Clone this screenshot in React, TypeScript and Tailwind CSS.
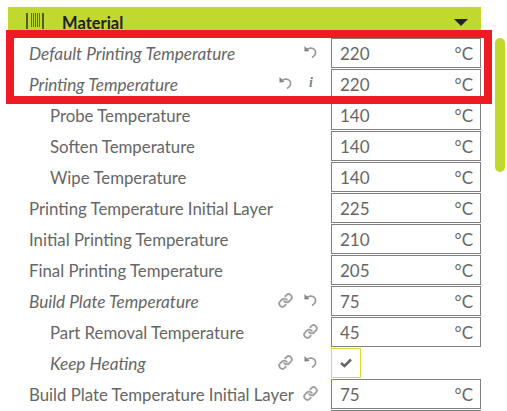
import { Link } from "lucide-react";

function ResetIcon() {
  return (
    <svg width="14" height="14" viewBox="0 0 14 14" fill="none">
      <path d="M0.500 1 L0.500 6.500 L5.500 6 Z" fill="#808080" />
      <path d="M3 4.500 C5 2.800 8.500 2.600 10.500 4.500 C12.500 6.800 12 10.500 8 12.500" stroke="#999999" strokeWidth="1.700" />
    </svg>
  );
}

function LinkIcon() {
  return <Link className="w-[15px] h-[15px] text-[#a0a0a0]" strokeWidth={3} />;
}

function InfoIcon() {
  return <span className="w-[14px] text-center font-['Liberation_Serif',serif] italic font-bold text-[14px] leading-none text-[#808080]">i</span>;
}

type RowProps = {
  label: string;
  value?: string;
  child?: boolean;
  italic?: boolean;
  link?: boolean;
  reset?: boolean;
  info?: boolean;
  check?: boolean;
};

const rows: RowProps[] = [
  { label: "Default Printing Temperature", value: "220", italic: true, reset: true },
  { label: "Printing Temperature", value: "220", italic: true, reset: true, info: true },
  { label: "Probe Temperature", value: "140", child: true },
  { label: "Soften Temperature", value: "140", child: true },
  { label: "Wipe Temperature", value: "140", child: true },
  { label: "Printing Temperature Initial Layer", value: "225" },
  { label: "Initial Printing Temperature", value: "210" },
  { label: "Final Printing Temperature", value: "205" },
  { label: "Build Plate Temperature", value: "75", italic: true, link: true, reset: true },
  { label: "Part Removal Temperature", value: "45", child: true, link: true },
  { label: "Keep Heating", check: true, child: true, italic: true, link: true, reset: true },
  { label: "Build Plate Temperature Initial Layer", value: "75", link: true },
  { label: "", value: "" },
];

function Row({ label, value, child, italic, link, reset, info, check }: RowProps) {
  return (
    <div className="flex h-[30px] items-center shrink-0">
      <span className={`${child ? "pl-[42px]" : "pl-[21px]"} ${italic ? "italic text-[17.200px] pt-px" : "text-[16.800px] pt-[2px]"} whitespace-nowrap text-[#666666]`}>
        {label}
      </span>
      <div className="ml-auto flex items-center gap-[11px] pr-[13px] -mt-[2px]">
        {link && <LinkIcon />}
        {reset && <ResetIcon />}
        {info && <InfoIcon />}
      </div>
      {check ? (
        <div className="w-[150px] h-[30px] shrink-0">
          <div className="w-[30px] h-[30px] border border-[#d0e040] flex items-center justify-center">
            <svg width="12" height="10" viewBox="0 0 12 10" fill="none">
              <path d="M1 5 L4.500 8 L11 1.500" stroke="#666666" strokeWidth="2.500" />
            </svg>
          </div>
        </div>
      ) : (
        <div className="w-[150px] h-[30px] shrink-0 border border-[#808080] flex items-center justify-between pt-px pl-[8px] pr-[7px] text-[17px] text-[#666666]">
          <span>{value}</span>
          {value && <span>°C</span>}
        </div>
      )}
    </div>
  );
}

export default function App() {
  return (
    <div className="relative w-[507px] h-[411px] overflow-hidden bg-white font-['Lato',sans-serif]">
      <div className="flex h-full pt-[7px] pl-[8px]">
        <div className="w-[473px] flex flex-col gap-[1px]">
          {/* Category header */}
          <div className="flex items-start h-[30px] shrink-0 bg-[#c1d82f] pt-[5px]">
            <svg className="ml-[18px] mt-[1px]" width="18" height="17" viewBox="0 0 18 17" fill="none">
              <path d="M1 0V16M17 0V16" stroke="#333333" strokeWidth="1.500" />
              <path d="M5.500 0V14M7.500 0V14M9.500 0V14M11.500 0V14M13.500 0V14" stroke="#555555" strokeWidth="0.900" />
            </svg>
            <span className="ml-[18px] font-bold text-[16.500px] leading-[22px] text-[#222222]">Material</span>
            <svg className="ml-auto mr-[13px] mt-[7px]" width="14" height="7" viewBox="0 0 14 7">
              <path d="M0 0H14L7 7Z" fill="#222222" />
            </svg>
          </div>
          {rows.map((r, i) => (
            <Row key={i} {...r} />
          ))}
        </div>
        {/* Scrollbar */}
        <div className="ml-[14px] mt-[31px] w-[10px] h-[134px] rounded-full bg-[#c1d82f]" />
      </div>
      {/* Annotation */}
      <div className="absolute left-[6px] top-[30px] w-[486px] h-[74px] border-[8px] border-[#ed1c24]" />
    </div>
  );
}
